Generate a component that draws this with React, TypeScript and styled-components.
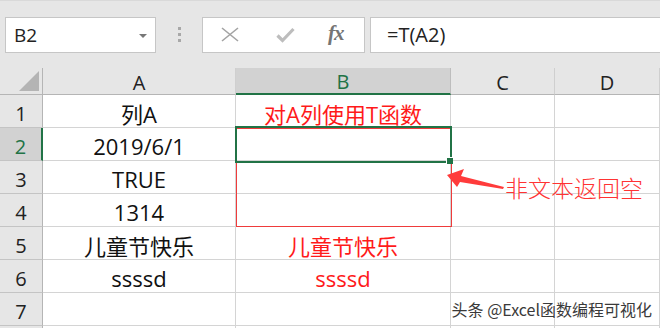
import React from "react";
import styled, { createGlobalStyle, css } from "styled-components";

const GlobalStyle = createGlobalStyle`
  html, body {
    margin: 0;
    padding: 0;
    background: #ffffff;
  }
  body {
    width: 660px;
    height: 328px;
    overflow: hidden;
    font-family: "Open Sans", "Noto Sans CJK SC", sans-serif;
  }
`;

const GREEN = "#217346";
const GRID = "#d4d4d4";
const HEAD_LINE = "#b5b5b5";

const Page = styled.div`
  width: 660px;
  height: 328px;
  display: flex;
  flex-direction: column;
  overflow: hidden;
`;

const FormulaBar = styled.div`
  height: 68px;
  flex: none;
  display: flex;
  align-items: center;
  padding-left: 5px;
  background: #e6e6e6;
  border-top: 1px solid #d9d9d9;
  box-sizing: border-box;
`;

const Field = styled.div`
  height: 36px;
  box-sizing: border-box;
  background: #ffffff;
  border: 1px solid #c6c6c6;
  display: flex;
  align-items: center;
`;

const NameBox = styled(Field)`
  width: 151px;
  padding: 0 8px 0 8px;
  justify-content: space-between;
  font-size: 19px;
  color: #222;
`;

const Caret = styled.span`
  width: 0;
  height: 0;
  border-left: 4px solid transparent;
  border-right: 4px solid transparent;
  border-top: 4px solid #777;
  margin-top: 2px;
`;

const Grip = styled.div`
  width: 46px;
  display: flex;
  flex-direction: column;
  align-items: center;
  gap: 3px;
  span {
    width: 3px;
    height: 3px;
    background: #a8a8a8;
  }
`;

const ButtonBox = styled(Field)`
  width: 163px;
  padding-left: 18px;
`;

const IconSlot = styled.div<{ $w: number }>`
  width: ${(p) => p.$w}px;
  display: flex;
  align-items: center;
  justify-content: flex-start;
`;

const Fx = styled.span`
  font-family: "Liberation Serif", "DejaVu Serif", serif;
  font-style: italic;
  font-weight: bold;
  font-size: 21px;
  color: #757575;
  letter-spacing: -1px;
  margin-top: -2px;
`;

const FormulaInput = styled(Field)`
  flex: 1;
  margin-left: 5px;
  margin-right: -4px;
  padding-left: 16px;
  font-size: 20px;
  color: #222;
`;

const Sheet = styled.div`
  position: relative;
  display: grid;
  grid-template-columns: 43px 193px 215px 104px 105px;
  grid-template-rows: 27px repeat(8, 33px);
  flex: none;
`;

const cellBase = css`
  box-sizing: border-box;
  display: flex;
  align-items: center;
  justify-content: center;
  border-right: 1px solid ${GRID};
  border-bottom: 1px solid ${GRID};
  white-space: nowrap;
`;

const Corner = styled.div`
  ${cellBase};
  background: #e6e6e6;
  border-right: 1px solid ${HEAD_LINE};
  border-bottom: 1px solid ${HEAD_LINE};
  justify-content: flex-end;
  align-items: flex-end;
  padding: 0 3px 3px 0;
`;

const Triangle = styled.div`
  width: 0;
  height: 0;
  border-left: 20px solid transparent;
  border-bottom: 20px solid #b4b4b4;
`;

const ColHead = styled.div<{ $active?: boolean }>`
  ${cellBase};
  background: ${(p) => (p.$active ? "#d2d2d2" : "#e6e6e6")};
  border-right: 1px solid ${(p) => (p.$active ? "#bdbdbd" : "#cfcfcf")};
  border-bottom: ${(p) => (p.$active ? `2px solid ${GREEN}` : `1px solid ${HEAD_LINE}`)};
  color: ${(p) => (p.$active ? GREEN : "#222")};
  font-size: 20px;
  padding-top: 2px;
`;

const RowHead = styled.div<{ $active?: boolean }>`
  ${cellBase};
  background: ${(p) => (p.$active ? "#d2d2d2" : "#e6e6e6")};
  border-right: ${(p) => (p.$active ? `2px solid ${GREEN}` : `1px solid ${HEAD_LINE}`)};
  border-bottom: 1px solid #c4c4c4;
  color: ${(p) => (p.$active ? GREEN : "#222")};
  font-size: 20px;
  padding-top: 4px;
`;

const Cell = styled.div<{ $red?: boolean }>`
  ${cellBase};
  background: #ffffff;
  color: ${(p) => (p.$red ? "#ff1a1a" : "#111")};
  font-size: 22px;
  padding-top: 3px;
`;

const Selection = styled.div`
  position: absolute;
  left: 235px;
  top: 58px;
  width: 217px;
  height: 37px;
  box-sizing: border-box;
  border: 2px solid ${GREEN};
  pointer-events: none;
  &::after {
    content: "";
    position: absolute;
    right: -3px;
    bottom: -3px;
    width: 6px;
    height: 6px;
    background: ${GREEN};
    border: 1px solid #ffffff;
    border-right: none;
    border-bottom: none;
  }
`;

const RedBox = styled.div`
  position: absolute;
  left: 236px;
  top: 60px;
  width: 216px;
  height: 99px;
  box-sizing: border-box;
  border: 1px solid #ef3b3b;
  pointer-events: none;
`;

const Arrow = styled.svg`
  position: absolute;
  left: 445px;
  top: 99px;
`;

const Note = styled.div`
  position: absolute;
  left: 505px;
  top: 104px;
  font-family: "Noto Sans CJK SC", sans-serif;
  font-weight: 300;
  font-size: 23px;
  line-height: 30px;
  color: #ff3333;
`;

const Watermark = styled.div`
  position: absolute;
  right: 8px;
  top: 231px;
  font-family: "Noto Sans CJK SC", sans-serif;
  font-size: 16px;
  line-height: 20px;
  color: #3a3a3a;
  text-shadow: 0 0 2px #ffffff, 0 0 2px #ffffff;
`;

const columns = ["A", "B", "C", "D"];

const rows: [string, string][] = [
  ["列A", "对A列使用T函数"],
  ["2019/6/1", ""],
  ["TRUE", ""],
  ["1314", ""],
  ["儿童节快乐", "儿童节快乐"],
  ["ssssd", "ssssd"],
  ["", ""],
  ["", ""],
];

export default function App() {
  return (
    <Page>
      <GlobalStyle />
      <FormulaBar>
        <NameBox>
          <span>B2</span>
          <Caret />
        </NameBox>
        <Grip>
          <span />
          <span />
          <span />
        </Grip>
        <ButtonBox>
          <IconSlot $w={55}>
            <svg width="18" height="15" viewBox="0 0 18 15">
              <path d="M1 1 L17 14 M17 1 L1 14" stroke="#a3a3a3" strokeWidth="1.6" fill="none" />
            </svg>
          </IconSlot>
          <IconSlot $w={52}>
            <svg width="19" height="16" viewBox="0 0 19 16">
              <path d="M1.5 8.5 L6.5 13.5 L17.5 2" stroke="#bdbdbd" strokeWidth="3.2" fill="none" />
            </svg>
          </IconSlot>
          <Fx>fx</Fx>
        </ButtonBox>
        <FormulaInput>=T(A2)</FormulaInput>
      </FormulaBar>

      <Sheet>
        <Corner>
          <Triangle />
        </Corner>
        {columns.map((c) => (
          <ColHead key={c} $active={c === "B"}>
            {c}
          </ColHead>
        ))}
        {rows.map(([a, b], i) => (
          <React.Fragment key={i}>
            <RowHead $active={i === 1}>{i < 7 ? i + 1 : ""}</RowHead>
            <Cell>{a}</Cell>
            <Cell $red>{b}</Cell>
            <Cell />
            <Cell />
          </React.Fragment>
        ))}

        <RedBox />
        <Selection />
        <Arrow width="62" height="24" viewBox="0 0 62 24">
          <polygon points="2,8 19,2 16,9 59,20 58,22 15,15 12,20" fill="#ff3b3b" />
        </Arrow>
        <Note>非文本返回空</Note>
        <Watermark>头条 @Excel函数编程可视化</Watermark>
      </Sheet>
    </Page>
  );
}
